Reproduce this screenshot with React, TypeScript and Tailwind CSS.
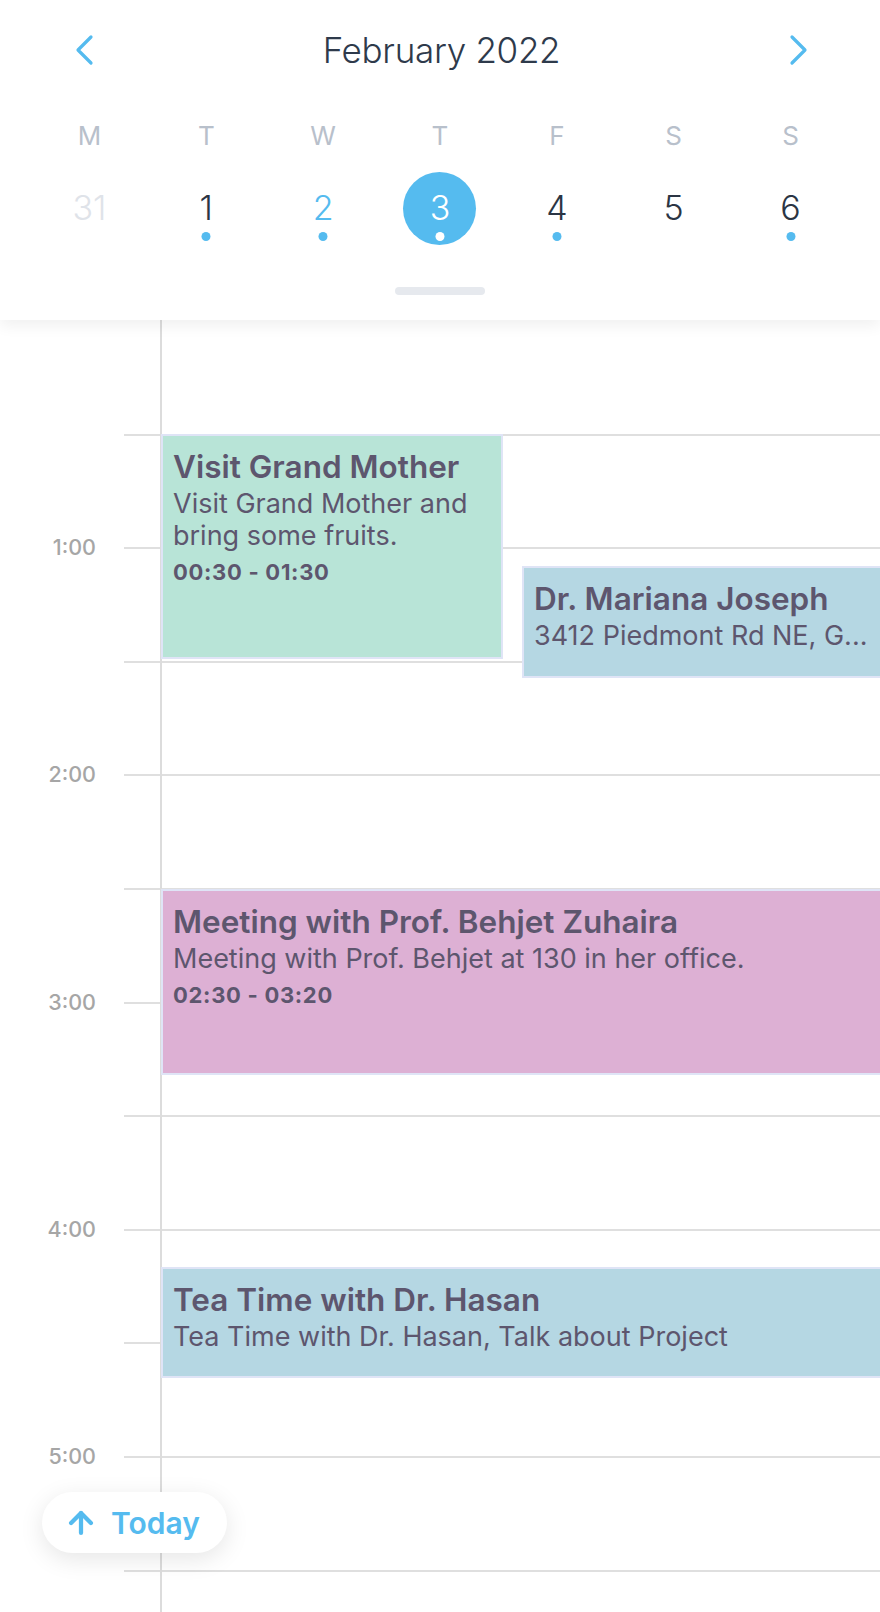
import { ArrowUp } from 'lucide-react';

type Day = { letter: string; num: number; state: 'faded' | 'normal' | 'today' | 'selected'; dot: boolean };

const days: Day[] = [
  { letter: 'M', num: 31, state: 'faded', dot: false },
  { letter: 'T', num: 1, state: 'normal', dot: true },
  { letter: 'W', num: 2, state: 'today', dot: true },
  { letter: 'T', num: 3, state: 'selected', dot: true },
  { letter: 'F', num: 4, state: 'normal', dot: true },
  { letter: 'S', num: 5, state: 'normal', dot: false },
  { letter: 'S', num: 6, state: 'normal', dot: true },
];

// each row is half an hour; label only on full hours
const rows = ['', '', '1:00', '', '2:00', '', '3:00', '', '4:00', '', '5:00', '', ''];

type CalEvent = {
  title: string;
  desc: string;
  time?: string;
  top: number;
  height: number;
  left: number;
  width?: number;
  truncate?: boolean;
  color: string;
};

const events: CalEvent[] = [
  {
    title: 'Visit Grand Mother',
    desc: 'Visit Grand Mother and bring some fruits.',
    time: '00:30 - 01:30',
    top: 114,
    height: 225,
    left: 161,
    width: 342,
    color: 'bg-[#b8e4d7]',
  },
  {
    title: 'Dr. Mariana Joseph',
    desc: '3412 Piedmont Rd NE, G...',
    top: 246,
    height: 112,
    left: 522,
    truncate: true,
    color: 'bg-[#b5d7e3]',
  },
  {
    title: 'Meeting with Prof. Behjet Zuhaira',
    desc: 'Meeting with Prof. Behjet at 130 in her office.',
    time: '02:30 - 03:20',
    top: 569,
    height: 186,
    left: 161,
    color: 'bg-[#ddb0d4]',
  },
  {
    title: 'Tea Time with Dr. Hasan',
    desc: 'Tea Time with Dr. Hasan, Talk about Project',
    top: 947,
    height: 111,
    left: 161,
    color: 'bg-[#b5d7e3]',
  },
];

function Chevron({ dir }: { dir: 'left' | 'right' }) {
  return (
    <svg width="22" height="32" viewBox="0 0 22 32" fill="none" className="text-[#55bbef]">
      <polyline
        points={dir === 'left' ? '18,3 5,16 18,29' : '4,3 17,16 4,29'}
        stroke="currentColor"
        strokeWidth="3.2"
        strokeLinecap="round"
        strokeLinejoin="round"
      />
    </svg>
  );
}

function WeekHeader() {
  return (
    <div className="relative z-10 h-[320px] bg-white shadow-[0_6px_14px_rgba(0,0,0,0.06)] flex flex-col">
      {/* Month row */}
      <div className="h-[100px] flex items-center justify-between pl-[73px] pr-[70px]">
        <Chevron dir="left" />
        <div className="text-[35px] font-light text-[#2e3a4b] tracking-[-0.3px]">February 2022</div>
        <Chevron dir="right" />
      </div>

      {/* Weekday letters */}
      <div className="grid grid-cols-7 px-[31px] h-[40px] mt-[15px]">
        {days.map((d, i) => (
          <div key={i} className="flex items-center justify-center text-[26px] text-[#b8c0cb]">
            {d.letter}
          </div>
        ))}
      </div>

      {/* Dates */}
      <div className="grid grid-cols-7 px-[31px] mt-[17px]">
        {days.map((d, i) => (
          <div key={i} className="flex justify-center">
            <div
              className={`relative w-[73px] h-[73px] rounded-full flex items-center justify-center text-[34px] font-light ${
                d.state === 'selected'
                  ? 'bg-[#55bbef] text-white'
                  : d.state === 'today'
                  ? 'text-[#55bbef]'
                  : d.state === 'faded'
                  ? 'text-[#dfe3e9]'
                  : 'text-[#2b3544]'
              }`}
            >
              <span className="leading-none -mt-[2px]">{d.num}</span>
              {d.dot && (
                <span
                  className={`absolute left-1/2 -translate-x-1/2 bottom-[4px] w-[9px] h-[9px] rounded-full ${
                    d.state === 'selected' ? 'bg-white' : 'bg-[#55bbef]'
                  }`}
                />
              )}
            </div>
          </div>
        ))}
      </div>

      {/* Drag handle */}
      <div className="mt-[42px] flex justify-center">
        <div className="w-[90px] h-[8px] rounded-full bg-[#e6e9ee]" />
      </div>
    </div>
  );
}

function Timeline() {
  return (
    <div className="relative flex-1 overflow-hidden">
      {/* vertical axis */}
      <div className="absolute left-[160px] top-0 bottom-0 w-[2px] bg-[#dcdcdc]" />

      <div className="flex flex-col">
        {rows.map((label, i) => (
          <div key={i} className="h-[113.6px] flex">
            <div className="w-[96px] -mt-[13px] h-[26px] text-right text-[21.5px] font-medium text-[#a6a6a6] leading-[26px]">
              {label}
            </div>
            <div className={`ml-[28px] flex-1 h-[2px] ${i === 0 ? 'bg-transparent' : 'bg-[#dfdfdf]'}`} />
          </div>
        ))}
      </div>

      {events.map((e, i) => (
        <div
          key={i}
          className={`absolute ${e.color} border-2 border-[#dfe4f6] pl-[10px] pr-[12px] pt-[11px] text-[#5d566e] overflow-hidden`}
          style={{
            top: e.top,
            height: e.height,
            left: e.left,
            width: e.width ?? 880 - e.left + 4,
          }}
        >
          <div className="text-[31.5px] font-semibold leading-[40px] whitespace-nowrap">{e.title}</div>
          <div className={`text-[27px] leading-[32px] mt-[1px] ${e.truncate ? 'truncate' : ''}`}>{e.desc}</div>
          {e.time && <div className="text-[22px] font-bold leading-[40px] tracking-[0.7px]">{e.time}</div>}
        </div>
      ))}
    </div>
  );
}

export default function App() {
  return (
    <div
      className="relative w-[880px] h-[1612px] bg-white overflow-hidden flex flex-col"
      style={{ fontFamily: 'Inter, "Noto Sans", sans-serif' }}
    >
      <WeekHeader />
      <Timeline />

      {/* Today floating button */}
      <div className="absolute left-[42px] top-[1492px] w-[185px] h-[61px] rounded-full bg-white shadow-[0_6px_24px_rgba(0,0,0,0.10)] flex items-center pl-[22px] gap-[13px] z-20">
        <ArrowUp className="w-[34px] h-[34px] text-[#55bbef]" strokeWidth={3} />
        <span className="text-[30px] font-semibold text-[#55bbef] leading-none">Today</span>
      </div>
    </div>
  );
}
